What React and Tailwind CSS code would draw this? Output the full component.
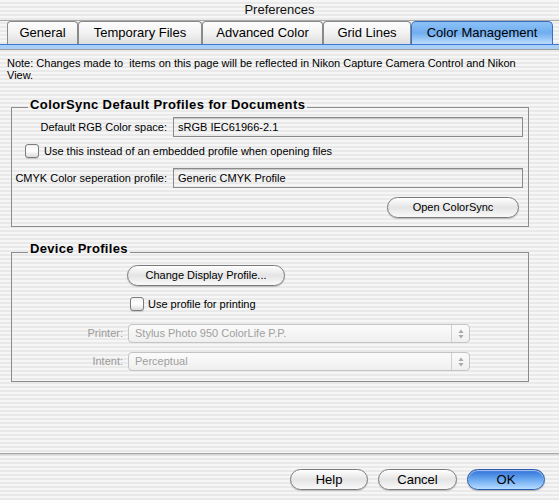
import React from 'react';

const stripes = "bg-[repeating-linear-gradient(180deg,#f6f6f6_0px,#f6f6f6_2px,#e9e9e9_2px,#e9e9e9_4px)]";

const tabs = [
    { label: 'General', w: 'w-[71px]' },
    { label: 'Temporary Files', w: 'w-[124px]' },
    { label: 'Advanced Color', w: 'w-[121px]' },
    { label: 'Grid Lines', w: 'w-[88px]' },
    { label: 'Color Management', w: 'w-[142px]', active: true },
];

const AquaButton = ({ children, className = '', primary = false, small = false }) => {
    const size = small ? 'text-[11px]' : 'text-[13px]';
    return (
        <button
            className={
                primary
                    ? `h-[21px] rounded-full border border-[#2b5aa8] bg-gradient-to-b from-[#2f6fd6] via-[#6aa8f0] to-[#b6dcff] text-black shadow-[inset_0_1px_1px_rgba(255,255,255,0.6),0_1px_1px_rgba(0,0,0,0.25)] ${size} ${className}`
                    : `h-[21px] rounded-full border border-[#7a7a7a] bg-gradient-to-b from-[#ffffff] via-[#e4e4e4] to-[#fafafa] text-black shadow-[0_1px_1px_rgba(0,0,0,0.2)] ${size} ${className}`
            }
        >
            {children}
        </button>
    );
};

const Checkbox = () => (
    <span className="inline-block w-[14px] h-[14px] rounded-[3px] border border-[#7c7c7c] bg-gradient-to-b from-[#f0f0f0] via-[#ffffff] to-[#dcdcdc] shadow-[0_1px_1px_rgba(0,0,0,0.15)]" />
);

const TextField = ({ value }) => (
    <div className="w-[350px] h-[20px] border border-[#8a8a8a] shadow-[inset_0_1px_0_#c8c8c8] flex items-center pl-[4px] text-[11px] text-black">
        {value}
    </div>
);

const PopupDisabled = ({ value }) => (
    <div className="w-[342px] h-[19px] rounded-[4px] border border-[#c4c4c4] bg-gradient-to-b from-[#fbfbfb] to-[#efefef] flex items-center text-[11px] text-[#a0a0a0]">
        <span className="flex-1 pl-[6px]">{value}</span>
        <span className="w-[18px] h-full border-l border-[#d0d0d0] flex items-center justify-center">
            <svg width="6" height="10" viewBox="0 0 6 10">
                <path d="M3 0.5 L5.5 4 L0.5 4 Z" fill="#a8a8a8" />
                <path d="M3 9.5 L5.5 6 L0.5 6 Z" fill="#a8a8a8" />
            </svg>
        </span>
    </div>
);

const App = () => {
    return (
        <div className={`w-[559px] h-[500px] overflow-hidden flex flex-col text-black font-['Liberation_Sans',Arial,sans-serif] ${stripes}`}>
            {/* Title */}
            <div className="h-[20px] flex items-center justify-center text-[13px] text-[#111]">Preferences</div>

            {/* Tabs */}
            <div className="h-[24px] border-t border-[#a8a8a8] flex items-end pl-[7px]">
                {tabs.map((t) => (
                    <div
                        key={t.label}
                        className={
                            t.active
                                ? `${t.w} h-[23px] rounded-t-[5px] border border-b-0 border-[#3b6fc4] bg-gradient-to-b from-[#8cc2f6] via-[#70adf0] to-[#bcdcfb] flex items-center justify-center text-[13px]`
                                : `${t.w} h-[23px] rounded-t-[4px] border border-b-0 border-[#8a8a8a] bg-gradient-to-b from-[#fdfdfd] via-[#f2f2f2] to-[#dedede] flex items-center justify-center text-[13px]`
                        }
                    >
                        {t.label}
                    </div>
                ))}
            </div>
            <div className="h-[6px] border-t border-[#3f78d2] bg-[#a9cff6] border-b border-b-[#9c9c9c]" />

            {/* Content */}
            <div className="flex-1 flex flex-col">
                <p className="mt-[7px] px-[7px] w-[530px] text-[11px] leading-[12px]">
                    Note: Changes made to&nbsp; items on this page will be reflected in Nikon Capture Camera Control and Nikon View.
                </p>

                <fieldset className="mt-[17px] ml-[11px] w-[518px] border border-[#8c8c8c] pt-[1px] pb-[8px]">
                    <legend className="ml-[16px] px-[2px] pb-[4px] text-[13px] font-bold leading-[14px] tracking-[0.4px]">
                        ColorSync Default Profiles for Documents
                    </legend>
                    <div className="flex items-center gap-[6px]">
                        <span className="w-[155px] text-right text-[11px]">Default RGB Color space:</span>
                        <TextField value="sRGB IEC61966-2.1" />
                    </div>
                    <div className="mt-[7px] ml-[13px] flex items-center gap-[5px] text-[11px] leading-[14px]">
                        <Checkbox />
                        <span>Use this instead of an embedded profile when opening files</span>
                    </div>
                    <div className="mt-[10px] flex items-center gap-[6px]">
                        <span className="w-[155px] text-right text-[11px]">CMYK Color seperation profile:</span>
                        <TextField value="Generic CMYK Profile" />
                    </div>
                    <div className="mt-[9px] flex justify-end pr-[9px]">
                        <AquaButton small className="w-[132px]">Open ColorSync</AquaButton>
                    </div>
                </fieldset>

                <fieldset className="mt-[15px] ml-[11px] w-[518px] border border-[#8c8c8c] pt-0 pb-[10px]">
                    <legend className="ml-[16px] px-[2px] pb-[6px] text-[13px] font-bold leading-[14px] tracking-[0.3px]">
                        Device Profiles
                    </legend>
                    <div className="ml-[115px]">
                        <AquaButton small className="w-[158px]">Change Display Profile...</AquaButton>
                    </div>
                    <div className="mt-[11px] ml-[118px] flex items-center gap-[4px] text-[11px] leading-[14px]">
                        <Checkbox />
                        <span>Use profile for printing</span>
                    </div>
                    <div className="mt-[13px] flex items-center gap-[5px] leading-[19px]">
                        <span className="w-[111px] text-right text-[11px] text-[#9a9a9a]">Printer:</span>
                        <PopupDisabled value="Stylus Photo 950 ColorLife P.P." />
                    </div>
                    <div className="mt-[9px] flex items-center gap-[5px] leading-[19px]">
                        <span className="w-[111px] text-right text-[11px] text-[#9a9a9a]">Intent:</span>
                        <PopupDisabled value="Perceptual" />
                    </div>
                </fieldset>
            </div>

            {/* Separator */}
            <div className="h-[1px] bg-[#a6a6a6]" />
            <div className="h-[2px] bg-gradient-to-b from-[#cdcdcd] to-transparent" />

            {/* Footer */}
            <div className="h-[44px] flex justify-end items-start pt-[13px] pr-[14px] gap-[10px]">
                <AquaButton className="w-[78px]">Help</AquaButton>
                <AquaButton className="w-[79px]">Cancel</AquaButton>
                <AquaButton primary className="w-[78px]">OK</AquaButton>
            </div>
        </div>
    );
};

export default App;
